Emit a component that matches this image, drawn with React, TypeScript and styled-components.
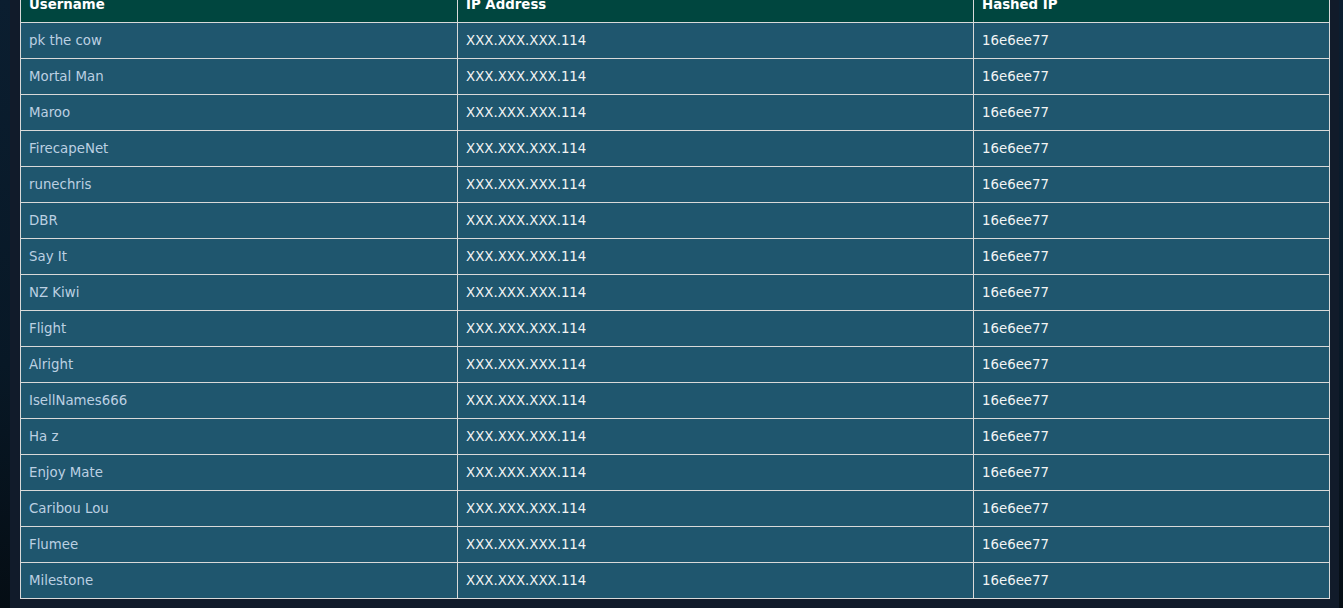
import styled, { createGlobalStyle } from "styled-components";

const GlobalStyle = createGlobalStyle`
  html, body {
    margin: 0;
    padding: 0;
    background-color: #081624;
    background-image:
      radial-gradient(1px 1px at 6px 40px, #4a6a88 50%, transparent 51%),
      radial-gradient(1px 1px at 3px 150px, #5b7c9a 50%, transparent 51%),
      radial-gradient(1px 1px at 5px 250px, #3f6080 50%, transparent 51%),
      radial-gradient(1px 1px at 2px 330px, #4a6a88 50%, transparent 51%),
      radial-gradient(1px 1px at 1341px 90px, #3f6080 50%, transparent 51%),
      radial-gradient(1px 1px at 1341px 420px, #4a6a88 50%, transparent 51%),
      linear-gradient(180deg, #0b1e30 0%, #081826 60%, #050d14 100%);
    font-family: "DejaVu Sans", Verdana, sans-serif;
    overflow: hidden;
  }
`;

const Page = styled.div`
  margin: -24px 0 0 10px;
  width: 1309px;
  padding: 10px 10px 9px;
  background: #111b2a;
  min-height: 100vh;
`;

const Table = styled.table`
  width: 100%;
  border-collapse: collapse;
  table-layout: fixed;
  font-size: 10pt;
`;

const HeadCell = styled.th<{ $width: number }>`
  width: ${({ $width }) => $width}px;
  background: #00463f;
  color: #ffffff;
  font-weight: bold;
  text-align: left;
  height: 36px;
  padding: 0 8px;
  border: 1px solid #d9d9d9;
  box-sizing: border-box;
  line-height: 16px;
`;

const Row = styled.tr`
  background: #1f566e;
`;

const Cell = styled.td<{ $muted?: boolean }>`
  height: 36px;
  padding: 0 8px;
  border: 1px solid #d9d9d9;
  color: ${({ $muted }) => ($muted ? "#bcd0e2" : "#f2f4f4")};
  line-height: 16px;
  box-sizing: border-box;
`;

const users = [
  "pk the cow",
  "Mortal Man",
  "Maroo",
  "FirecapeNet",
  "runechris",
  "DBR",
  "Say It",
  "NZ Kiwi",
  "Flight",
  "Alright",
  "IsellNames666",
  "Ha z",
  "Enjoy Mate",
  "Caribou Lou",
  "Flumee",
  "Milestone",
];

export default function App() {
  return (
    <>
      <GlobalStyle />
      <Page>
        <Table>
          <thead>
            <tr>
              <HeadCell $width={437}>Username</HeadCell>
              <HeadCell $width={516}>IP Address</HeadCell>
              <HeadCell $width={356}>Hashed IP</HeadCell>
            </tr>
          </thead>
          <tbody>
            {users.map((name) => (
              <Row key={name}>
                <Cell $muted>{name}</Cell>
                <Cell>XXX.XXX.XXX.114</Cell>
                <Cell>16e6ee77</Cell>
              </Row>
            ))}
          </tbody>
        </Table>
      </Page>
    </>
  );
}
